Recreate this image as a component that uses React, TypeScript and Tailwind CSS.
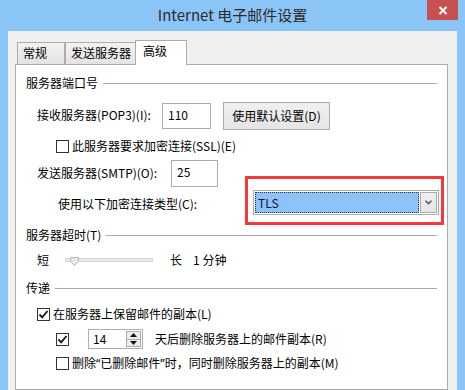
import React from 'react';

const CheckBox: React.FC<{ checked?: boolean }> = ({ checked }) => (
  <span className="flex h-[13px] w-[13px] shrink-0 items-center justify-center border border-[#333333] bg-white">
    {checked && (
      <svg width="11" height="11" viewBox="0 0 11 11">
        <path d="M1.5 5.5 L4.2 8.3 L9.5 2" fill="none" stroke="#1a1a1a" strokeWidth="1.9" />
      </svg>
    )}
  </span>
);

const GroupHeader: React.FC<{ title: string }> = ({ title }) => (
  <div className="flex h-4 items-center px-[10px]">
    <span className="whitespace-nowrap">{title}</span>
    <span className="ml-[5px] h-px flex-1 bg-[#a9a9a9]" />
  </div>
);

const TextBox: React.FC<{ value: string; width: string; height: string }> = ({ value, width, height }) => (
  <div className={`${width} ${height} shrink-0 border border-[#abadb3] bg-white pl-[5px] pt-[3px] leading-[16px]`}>{value}</div>
);

export default function App() {
  return (
    <div className="flex h-[390px] w-[465px] flex-col overflow-hidden bg-[#8bc4f7] font-['Segoe_UI','Noto_Sans_CJK_SC',sans-serif] text-[12px] leading-[16px] text-black">
      {/* title bar */}
      <div className="relative flex h-[31px] shrink-0 items-center justify-center">
        <span className="pb-px text-[15px] text-[#2b2b2b]">Internet 电子邮件设置</span>
        <div className="absolute right-[7px] top-0 flex h-[20px] w-[31px] items-center justify-center bg-[#c75050]">
          <svg width="10" height="9" viewBox="0 0 10 9">
            <path d="M1.5 1 L8.5 8 M8.5 1 L1.5 8" stroke="#fff" strokeWidth="2" />
          </svg>
        </div>
      </div>

      {/* client area */}
      <div className="mx-[8px] flex flex-1 flex-col bg-[#f0f0f0] pl-[7px] pr-[9px] pt-[9px]">
        {/* tabs */}
        <div className="flex h-[24px] shrink-0 items-end pl-[2px]">
          <div className="h-[22px] w-[48px] border border-b-0 border-[#acacac] bg-linear-to-b from-[#f2f2f2] to-[#e3e3e3] pl-[5px] pt-[2px]">常规</div>
          <div className="h-[22px] w-[71px] border border-b-0 border-[#acacac] bg-linear-to-b from-[#f2f2f2] to-[#e3e3e3] pl-[5px] pt-[2px]">发送服务器</div>
          <div className="relative z-10 -mb-px -ml-px h-[25px] w-[52px] border border-b-0 border-[#acacac] bg-white pl-[7px] pt-[2px]">高级</div>
        </div>

        {/* tab panel */}
        <div className="flex flex-1 flex-col border border-[#acacac] bg-white">
          <div className="mt-[10px]">
            <GroupHeader title="服务器端口号" />
          </div>

          <div className="mt-[11px] flex h-[28px] items-center pl-[21px]">
            <span className="w-[125px] shrink-0 pb-[3px]">接收服务器(POP3)(I):</span>
            <TextBox value="110" width="w-[49px]" height="h-[26px]" />
            <div className="ml-[12px] flex h-[28px] w-[107px] items-center justify-center border border-[#acacac] bg-linear-to-b from-[#f0f0f0] to-[#e5e5e5]">
              使用默认设置(D)
            </div>
          </div>

          <div className="mt-[8px] flex h-[16px] items-center pl-[40px]">
            <CheckBox />
            <span className="ml-[3px]">此服务器要求加密连接(SSL)(E)</span>
          </div>

          <div className="mt-[6px] flex h-[27px] items-center pl-[21px]">
            <span className="w-[134px] shrink-0 pb-[2px]">发送服务器(SMTP)(O):</span>
            <TextBox value="25" width="w-[47px]" height="h-[27px]" />
          </div>

          <div className="mt-[3px] flex h-[25px] items-center pl-[42px]">
            <span className="w-[195px] shrink-0 pt-[2px]">使用以下加密连接类型(C):</span>
            <div className="relative flex h-[25px] w-[186px] border border-[#acacac] bg-white p-[1px]">
              <div className="flex flex-1 items-center border border-dotted border-[#333333] bg-[#8ec3f9] pl-[2px] text-[#10103a]">TLS</div>
              <div className="ml-px flex w-[17px] items-center justify-center border border-[#acacac] bg-linear-to-b from-[#f0f0f0] to-[#e5e5e5]">
                <svg width="7" height="5" viewBox="0 0 7 5">
                  <path d="M0.5 0.8 L3.5 3.8 L6.5 0.8" fill="none" stroke="#555" strokeWidth="1.5" />
                </svg>
              </div>
              <div className="pointer-events-none absolute -bottom-[11px] -left-[9px] -right-[6px] -top-[15px] border-[3px] border-[#f23a3a]" />
            </div>
          </div>

          <div className="mt-[12px]">
            <GroupHeader title="服务器超时(T)" />
          </div>

          <div className="mt-[9px] flex h-[16px] items-center pl-[21px]">
            <span>短</span>
            <div className="relative ml-[16px] h-[4px] w-[88px] border border-[#d3d8d8] bg-[#e8ebeb]">
              <svg className="absolute -top-[2px] left-[4px]" width="9" height="9" viewBox="0 0 9 9">
                <path d="M0.5 0.5 H8.5 V4.5 L4.5 8.5 L0.5 4.5 Z" fill="#e6e6e6" stroke="#b9b9b9" />
              </svg>
            </div>
            <span className="ml-[17px]">长</span>
            <span className="ml-[11px]">1 分钟</span>
          </div>

          <div className="mt-[12px]">
            <GroupHeader title="传递" />
          </div>

          <div className="mt-[10px] flex h-[16px] items-center pl-[21px]">
            <CheckBox checked />
            <span className="ml-[3px]">在服务器上保留邮件的副本(L)</span>
          </div>

          <div className="mt-[7px] flex h-[20px] items-center pl-[40px]">
            <CheckBox checked />
            <div className="ml-[19px] flex h-[20px] w-[55px] border border-[#abadb3] bg-white">
              <span className="flex-1 pl-[4px] leading-[18px]">14</span>
              <div className="my-px mr-px flex w-[15px] flex-col border border-[#acacac] bg-[#ececec]">
                <div className="flex flex-1 items-center justify-center border-b border-[#acacac]">
                  <svg width="7" height="4" viewBox="0 0 7 4"><path d="M3.5 0 L7 4 H0 Z" fill="#111" /></svg>
                </div>
                <div className="flex flex-1 items-center justify-center">
                  <svg width="7" height="4" viewBox="0 0 7 4"><path d="M0 0 H7 L3.5 4 Z" fill="#111" /></svg>
                </div>
              </div>
            </div>
            <span className="ml-[12px]">天后删除服务器上的邮件副本(R)</span>
          </div>

          <div className="mt-[6px] flex h-[16px] items-center pl-[40px]">
            <CheckBox />
            <span className="ml-[3px]">
              删除<span className="font-['Noto_Sans',sans-serif]">“</span>已删除邮件<span className="font-['Noto_Sans',sans-serif]">”</span>时，同时删除服务器上的副本(M)
            </span>
          </div>
        </div>
      </div>
    </div>
  );
}
